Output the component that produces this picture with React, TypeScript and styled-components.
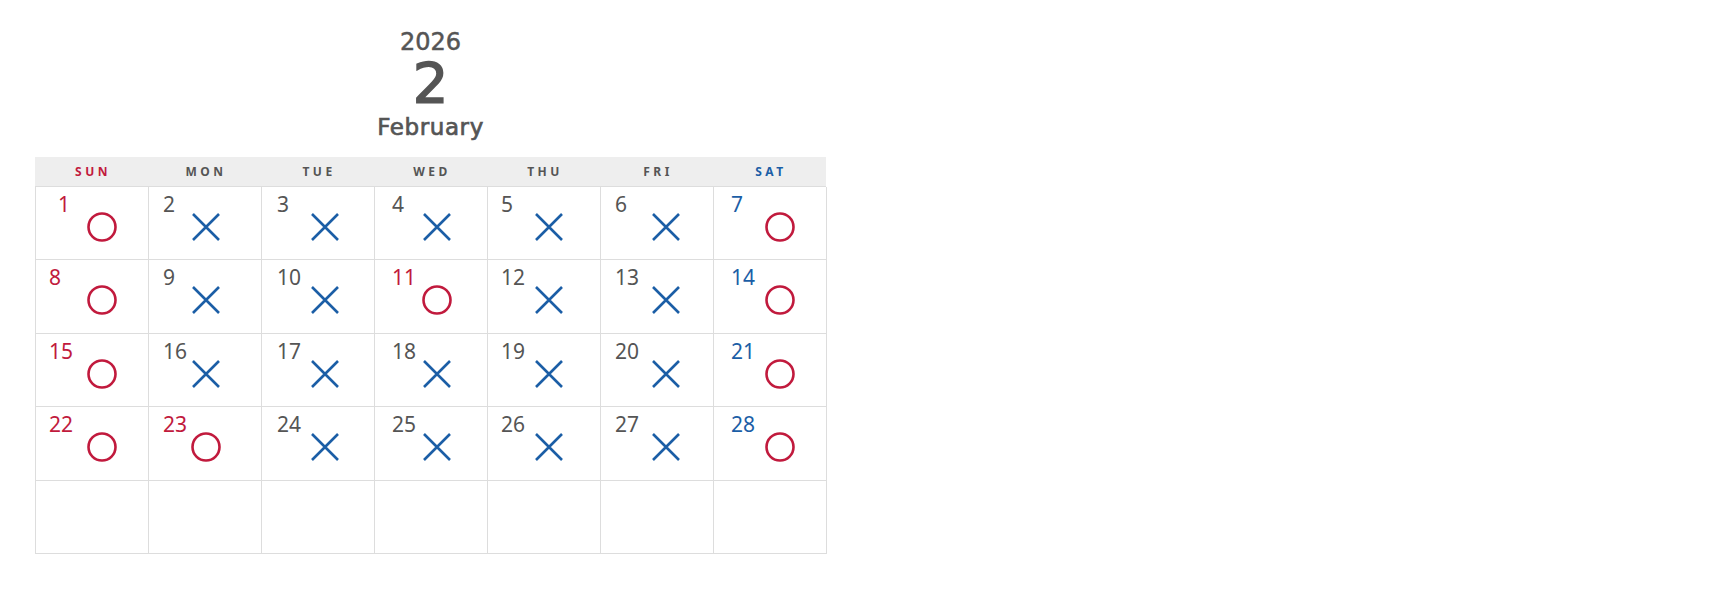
import React from 'react';
import styled, { createGlobalStyle } from 'styled-components';

const GlobalStyle = createGlobalStyle`
  body {
    margin: 0;
    background: #fff;
    font-family: "Noto Sans", "Liberation Sans", sans-serif;
  }
`;

const Page = styled.div`
  padding: 30px 0 0 35px;
  width: 791px;
`;

const TitleBlock = styled.div`
  display: flex;
  flex-direction: column;
  align-items: center;
  color: #555;
  font-family: "DejaVu Sans", "Liberation Sans", sans-serif;
  margin-bottom: 18px;
`;

const Year = styled.div`
  font-size: 24px;
  line-height: 24px;
  -webkit-text-stroke: 0.5px #555;
`;

const Month = styled.div`
  font-size: 56px;
  line-height: 46px;
  margin-top: 6px;
  -webkit-text-stroke: 1.6px #555;
`;

const MonthName = styled.div`
  font-size: 23px;
  line-height: 24px;
  margin-top: 9px;
  letter-spacing: 0.6px;
  -webkit-text-stroke: 0.7px #555;
`;

const Grid = styled.div`
  display: grid;
  grid-template-columns: repeat(7, 113px);
  grid-auto-rows: 73.4px;
  border-left: 1px solid #ddd;
`;

const HeadRow = styled.div`
  display: grid;
  grid-template-columns: repeat(7, 113px);
  height: 29px;
  background: #eee;
  border-bottom: 1px solid #ddd;
`;

const HeadCell = styled.div<{ $color: string }>`
  display: flex;
  align-items: center;
  justify-content: center;
  font-size: 12px;
  font-weight: 700;
  letter-spacing: 3.5px;
  padding-left: 3px;
  color: ${(p) => p.$color};
`;

const Cell = styled.div`
  display: flex;
  flex-direction: column;
  padding-top: 6px;
  border-right: 1px solid #ddd;
  border-bottom: 1px solid #ddd;
  box-sizing: border-box;
`;

const Num = styled.div<{ $x: number; $color: string }>`
  margin-left: ${(p) => p.$x}px;
  font-size: 21px;
  line-height: 22px;
  height: 22px;
  color: ${(p) => p.$color};
`;

const Mark = styled.div<{ $x: number }>`
  margin-left: ${(p) => p.$x - 15}px;
  margin-top: -3px;
  width: 30px;
  height: 30px;
`;

const RED = '#c11a3d';
const BLUE = '#1b5ea6';
const GRAY = '#555';

const days = ['SUN', 'MON', 'TUE', 'WED', 'THU', 'FRI', 'SAT'];
const numX = [13, 14, 15, 17, 13, 14, 17];
const markX = [66, 57, 63, 62, 61, 65, 66];

// o = open, x = closed
const status: Record<number, 'o' | 'x'> = {};
for (let d = 1; d <= 28; d++) {
  const dow = (d - 1) % 7;
  status[d] = dow === 0 || dow === 6 || d === 11 || d === 23 ? 'o' : 'x';
}
const holidays = [11, 23];

const Circle = () => (
  <svg width="30" height="30" viewBox="0 0 30 30">
    <circle cx="15" cy="15" r="13.5" fill="none" stroke={RED} strokeWidth="2.6" />
  </svg>
);

const Cross = () => (
  <svg width="30" height="30" viewBox="0 0 30 30">
    <path d="M2 2 L28 28 M28 2 L2 28" stroke={BLUE} strokeWidth="2.6" />
  </svg>
);

const App: React.FC = () => {
  const cells = [];
  for (let i = 0; i < 35; i++) {
    const d = i + 1;
    const col = i % 7;
    if (d > 28) {
      cells.push(<Cell key={i} />);
      continue;
    }
    const color = col === 0 || holidays.includes(d) ? RED : col === 6 ? BLUE : GRAY;
    cells.push(
      <Cell key={i}>
        <Num $x={d === 1 ? 22 : numX[col]} $color={color}>{d}</Num>
        <Mark $x={markX[col]}>{status[d] === 'o' ? <Circle /> : <Cross />}</Mark>
      </Cell>
    );
  }

  return (
    <Page>
      <GlobalStyle />
      <TitleBlock>
        <Year>2026</Year>
        <Month>2</Month>
        <MonthName>February</MonthName>
      </TitleBlock>
      <HeadRow>
        {days.map((d, i) => (
          <HeadCell key={d} $color={i === 0 ? RED : i === 6 ? BLUE : GRAY}>{d}</HeadCell>
        ))}
      </HeadRow>
      <Grid>{cells}</Grid>
    </Page>
  );
};

export default App;
